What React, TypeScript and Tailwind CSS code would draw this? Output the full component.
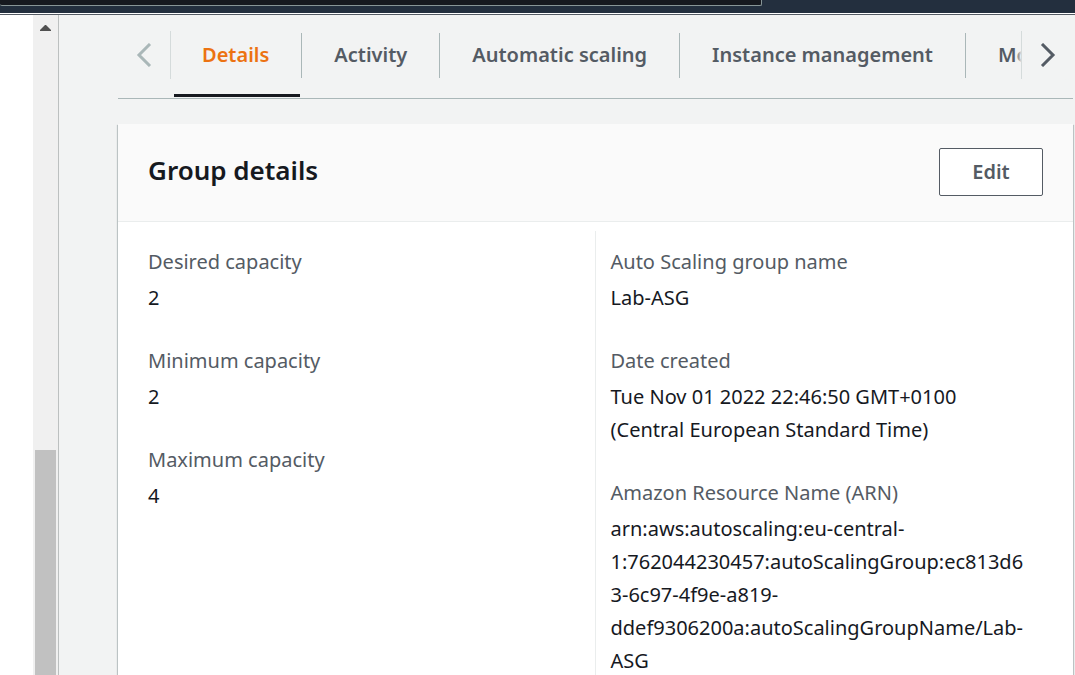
import type { ReactNode } from "react";

const tabs = ["Details", "Activity", "Automatic scaling", "Instance management", "Monitoring"];

function Chevron({ points }: { points: string }) {
  return (
    <svg width="16" height="24" viewBox="0 0 16 24" fill="none" stroke="currentColor" strokeWidth="3" aria-hidden="true">
      <polyline points={points} />
    </svg>
  );
}

function ConsoleHeader() {
  return (
    <header className="h-[15px] shrink-0 border-b border-[#545b64] bg-white pb-px">
      <div className="flex h-full items-start bg-[#232f3e]">
        <input
          type="search"
          aria-label="Search"
          className="h-1.5 w-[762px] rounded-b-xs border-r border-b border-[#879596] bg-[#16191f] outline-none"
        />
      </div>
    </header>
  );
}

function ListPane() {
  return (
    <aside className="flex w-[59px] shrink-0 border-r border-[#bcc0c0] bg-white">
      <div className="ml-auto flex w-[25px] flex-col items-center bg-[#f0f0f0] pt-2.5">
        <svg width="11" height="6" viewBox="0 0 11 6" fill="#505050" aria-hidden="true">
          <path d="M5 0H6L11 5V6H0V5Z" />
        </svg>
        <div className="flex w-full flex-1 flex-col px-0.5">
          <div className="h-[65%]" />
          <div className="flex-1 bg-[#c1c1c1]" />
        </div>
      </div>
    </aside>
  );
}

function TabBar() {
  return (
    <nav className="flex h-[84px] shrink-0 border-b border-[#aab7b8]">
      <button
        type="button"
        aria-label="Scroll tabs left"
        className="mt-4 flex h-12 w-[53px] shrink-0 items-center justify-center border-r border-[#d5dbdb] text-[#aab7b8]"
      >
        <Chevron points="14,1 3,12 14,23" />
      </button>
      <div role="tablist" className="flex min-w-0 flex-1 overflow-hidden">
        {tabs.map((tab, i) => (
          <div key={tab} className="relative flex shrink-0 flex-col pt-[18px]">
            <button
              type="button"
              role="tab"
              aria-selected={i === 0}
              className={
                i === 0
                  ? "h-[45px] border-r border-[#aab7b8] pr-8 pl-[31px] pb-0.5 font-semibold text-[#ec7211]"
                  : "h-[45px] border-r border-[#aab7b8] px-8 pb-0.5 font-semibold text-[#545b64]"
              }
            >
              {tab}
            </button>
            {i === 0 && <span className="absolute right-0.5 bottom-px left-[3px] h-[3px] bg-[#16191f]" />}
          </div>
        ))}
      </div>
      <button
        type="button"
        aria-label="Scroll tabs right"
        className="relative mt-4 flex h-12 w-[52px] shrink-0 items-center justify-center border-l border-[#d5dbdb] text-[#545b64] shadow-[-3px_0_4px_-1px_#f2f3f3]"
      >
        <Chevron points="2,1 13,12 2,23" />
      </button>
    </nav>
  );
}

function Field({ label, children }: { label: string; children: ReactNode }) {
  return (
    <div>
      <dt className="mb-[3px] text-[#545b64]">{label}</dt>
      <dd className="break-words">{children}</dd>
    </div>
  );
}

function GroupDetails() {
  return (
    <section className="mt-[25px] flex flex-1 flex-col bg-white shadow-[0_1px_1px_0_rgba(0,28,36,0.15),1px_1px_1px_0_rgba(0,28,36,0.2),-1px_1px_1px_0_rgba(0,28,36,0.2)]">
      <div className="flex h-[98px] shrink-0 items-center justify-between border-b border-[#eaeded] bg-[#fafafa] px-[30px] pb-0.5">
        <h2 className="pb-0.5 text-[26px] font-semibold">Group details</h2>
        <button
          type="button"
          className="h-12 min-w-[104px] rounded-xs border border-[#545b64] bg-white px-6 font-semibold text-[#545b64]"
        >
          Edit
        </button>
      </div>
      <div className="grid flex-1 grid-cols-2 pt-[9px] pr-8 pl-[30px]">
        <dl className="flex flex-col gap-[30px] pt-3.5 pr-4">
          <Field label="Desired capacity">2</Field>
          <Field label="Minimum capacity">2</Field>
          <Field label="Maximum capacity">4</Field>
        </dl>
        <dl className="flex min-w-0 flex-col gap-[30px] border-l border-[#eaeded] pt-3.5 pl-[15px]">
          <Field label="Auto Scaling group name">Lab-ASG</Field>
          <Field label="Date created">
            Tue Nov 01 2022 22:46:50 GMT+0100
            <br />
            (Central European Standard Time)
          </Field>
          <Field label="Amazon Resource Name (ARN)">
            arn:aws:autoscaling:eu-central-1:762044230457:autoScalingGroup:ec813d6
            <br />
            3-6c97-4f9e-a819-ddef9306200a:autoScalingGroupName/Lab-ASG
          </Field>
        </dl>
      </div>
    </section>
  );
}

export default function App() {
  return (
    <div className="flex h-screen flex-col overflow-hidden bg-[#f2f3f3] font-['Noto_Sans',sans-serif] text-[20px] leading-[33px] text-[#16191f]">
      <ConsoleHeader />
      <div className="flex min-h-0 flex-1">
        <ListPane />
        <main className="flex min-w-0 flex-1 flex-col pr-0.5 pl-[59px]">
          <TabBar />
          <GroupDetails />
        </main>
      </div>
    </div>
  );
}
